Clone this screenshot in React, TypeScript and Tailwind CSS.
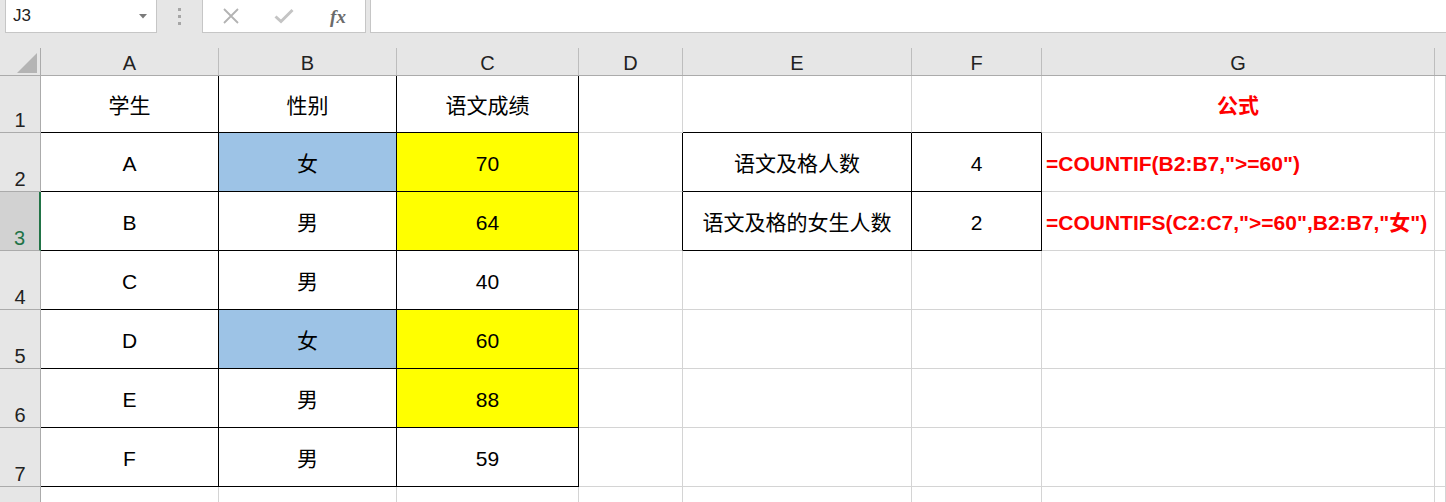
import React from 'react';

type Cell = {
  text?: string;
  bg?: string;
  border?: string;
  red?: boolean;
  formula?: boolean;
};

const colLetters = ['A', 'B', 'C', 'D', 'E', 'F', 'G', ''];

const GRID = 'border-r border-b border-[#d4d4d4]';
const BLACK = 'border-r border-b border-black';

// row 1..8, columns A..H
const rows: { h: string; cells: Cell[] }[] = [
  {
    h: 'h-[57px]',
    cells: [
      { text: '学生', border: BLACK },
      { text: '性别', border: BLACK },
      { text: '语文成绩', border: BLACK },
      {},
      { border: 'border-r border-r-[#d4d4d4] border-b border-b-black' },
      { border: 'border-r border-r-[#d4d4d4] border-b border-b-black' },
      { text: '公式', red: true },
      {},
    ],
  },
  {
    h: 'h-[59px]',
    cells: [
      { text: 'A', border: BLACK },
      { text: '女', border: BLACK, bg: 'bg-[#9dc3e6]' },
      { text: '70', border: BLACK, bg: 'bg-[#ffff00]' },
      { border: 'border-r border-r-black border-b border-b-[#d4d4d4]' },
      { text: '语文及格人数', border: BLACK },
      { text: '4', border: BLACK },
      { text: '=COUNTIF(B2:B7,">=60")', formula: true },
      {},
    ],
  },
  {
    h: 'h-[59px]',
    cells: [
      { text: 'B', border: BLACK },
      { text: '男', border: BLACK },
      { text: '64', border: BLACK, bg: 'bg-[#ffff00]' },
      { border: 'border-r border-r-black border-b border-b-[#d4d4d4]' },
      { text: '语文及格的女生人数', border: BLACK },
      { text: '2', border: BLACK },
      { text: '=COUNTIFS(C2:C7,">=60",B2:B7,"女")', formula: true },
      {},
    ],
  },
  {
    h: 'h-[59px]',
    cells: [
      { text: 'C', border: BLACK },
      { text: '男', border: BLACK },
      { text: '40', border: BLACK },
      {}, {}, {}, {}, {},
    ],
  },
  {
    h: 'h-[59px]',
    cells: [
      { text: 'D', border: BLACK },
      { text: '女', border: BLACK, bg: 'bg-[#9dc3e6]' },
      { text: '60', border: BLACK, bg: 'bg-[#ffff00]' },
      {}, {}, {}, {}, {},
    ],
  },
  {
    h: 'h-[59px]',
    cells: [
      { text: 'E', border: BLACK },
      { text: '男', border: BLACK },
      { text: '88', border: BLACK, bg: 'bg-[#ffff00]' },
      {}, {}, {}, {}, {},
    ],
  },
  {
    h: 'h-[59px]',
    cells: [
      { text: 'F', border: BLACK },
      { text: '男', border: BLACK },
      { text: '59', border: BLACK },
      {}, {}, {}, {}, {},
    ],
  },
  {
    h: 'h-[59px]',
    cells: [{}, {}, {}, {}, {}, {}, {}, {}],
  },
];

const FONT = "font-['Liberation_Sans','Noto_Sans_CJK_SC',sans-serif]";

const FormulaBar = () => (
  <div className="flex h-[48px] items-start bg-[#e6e6e6]">
    {/* name box */}
    <div className="ml-[5px] flex h-[33px] w-[152px] items-center justify-between border border-t-0 border-[#c6c6c6] bg-white pl-[7px] pr-[9px]">
      <span className="text-[17px] text-[#222]">J3</span>
      <svg width="8" height="5" viewBox="0 0 8 5">
        <path d="M0 0h8L4 4.5z" fill="#7a7a7a" />
      </svg>
    </div>
    {/* grip dots */}
    <div className="flex h-[33px] w-[45px] flex-col items-center justify-center gap-[4px]">
      <div className="h-[3px] w-[3px] bg-[#a6a6a6]" />
      <div className="h-[3px] w-[3px] bg-[#a6a6a6]" />
      <div className="h-[3px] w-[3px] bg-[#a6a6a6]" />
    </div>
    {/* buttons */}
    <div className="flex h-[33px] w-[164px] items-center border border-t-0 border-[#c6c6c6] bg-white">
      <div className="flex w-[54px] justify-center pl-[2px]">
        <svg width="18" height="18" viewBox="0 0 18 18">
          <path d="M2 2L16 16M16 2L2 16" stroke="#b3b3b3" strokeWidth="1.8" />
        </svg>
      </div>
      <div className="flex w-[54px] justify-center">
        <svg width="20" height="16" viewBox="0 0 20 16">
          <path d="M1.5 8.5L7 13.5L18.5 2" stroke="#c4c4c4" strokeWidth="3" fill="none" />
        </svg>
      </div>
      <div className="flex w-[54px] justify-center">
        <span className="font-['Liberation_Serif',serif] text-[19px] font-bold italic leading-none text-[#6b6b6b]">
          fx
        </span>
      </div>
    </div>
    {/* formula input */}
    <div className="ml-[4px] h-[33px] flex-1 border border-t-0 border-r-0 border-[#c6c6c6] bg-white" />
  </div>
);

const HeaderRow = () => (
  <div className="grid h-[28px] grid-cols-[41px_178px_178px_182px_104px_229px_130px_393px_1fr] border-b border-[#ababab] bg-[#e6e6e6]">
    <div className="relative border-r border-[#ababab]">
      <svg className="absolute left-[17px] top-[5px]" width="20" height="20" viewBox="0 0 20 20">
        <path d="M20 0V20H0Z" fill="#b4b4b4" />
      </svg>
    </div>
    {colLetters.map((c, i) => (
      <div
        key={i}
        className={`flex items-end justify-center text-[20px] leading-[24px] text-[#222] ${
          i < 7 ? 'border-r border-[#bdbdbd]' : ''
        }`}
      >
        {c}
      </div>
    ))}
  </div>
);

export default function App() {
  return (
    <div className={`h-[502px] w-[1446px] overflow-hidden bg-white ${FONT}`}>
      <FormulaBar />
      <HeaderRow />
      {rows.map((row, r) => (
        <div
          key={r}
          className={`grid ${row.h} grid-cols-[41px_178px_178px_182px_104px_229px_130px_393px_1fr]`}
        >
          <div
            className={`flex items-end justify-center text-[20px] leading-[24px] ${
              r === 2
                ? 'border-r-2 border-b border-r-[#217346] border-b-[#ababab] bg-[#d2d2d2] text-[#217346]'
                : 'border-r border-b border-[#ababab] bg-[#e6e6e6] text-[#222]'
            }`}
          >
            {r + 1}
          </div>
          {row.cells.map((cell, c) => (
            <div
              key={c}
              className={`flex items-center overflow-visible whitespace-nowrap pt-[3px] ${
                cell.formula ? 'justify-start pl-[4px]' : 'justify-center'
              } ${cell.border ?? GRID} ${cell.bg ?? ''}`}
            >
              {cell.text && (
                <span
                  className={
                    cell.formula || cell.red
                      ? 'text-[21px] font-bold text-[#ff0000]'
                      : 'text-[21px] text-black'
                  }
                >
                  {cell.text}
                </span>
              )}
            </div>
          ))}
        </div>
      ))}
    </div>
  );
}
